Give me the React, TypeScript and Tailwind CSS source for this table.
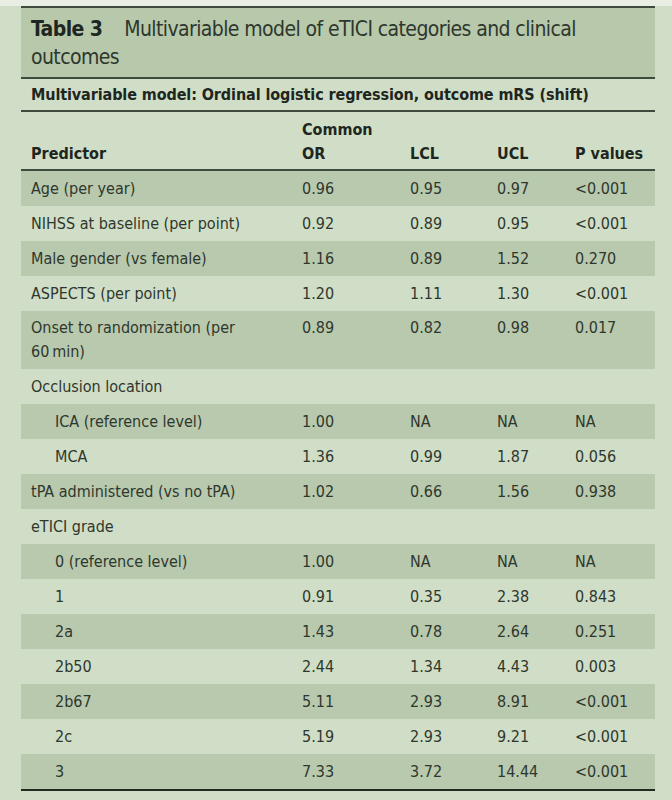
import React from 'react';

type Row = {
  label: string;
  vals?: [string, string, string, string];
  shaded?: boolean;
  indent?: boolean;
  tall?: boolean;
};

const rows: Row[] = [
  { label: 'Age (per year)', vals: ['0.96', '0.95', '0.97', '<0.001'], shaded: true },
  { label: 'NIHSS at baseline (per point)', vals: ['0.92', '0.89', '0.95', '<0.001'] },
  { label: 'Male gender (vs female)', vals: ['1.16', '0.89', '1.52', '0.270'], shaded: true },
  { label: 'ASPECTS (per point)', vals: ['1.20', '1.11', '1.30', '<0.001'] },
  { label: 'Onset to randomization (per 60\u2009min)', vals: ['0.89', '0.82', '0.98', '0.017'], shaded: true, tall: true },
  { label: 'Occlusion location' },
  { label: 'ICA (reference level)', vals: ['1.00', 'NA', 'NA', 'NA'], shaded: true, indent: true },
  { label: 'MCA', vals: ['1.36', '0.99', '1.87', '0.056'], indent: true },
  { label: 'tPA administered (vs no tPA)', vals: ['1.02', '0.66', '1.56', '0.938'], shaded: true },
  { label: 'eTICI grade' },
  { label: '0 (reference level)', vals: ['1.00', 'NA', 'NA', 'NA'], shaded: true, indent: true },
  { label: '1', vals: ['0.91', '0.35', '2.38', '0.843'], indent: true },
  { label: '2a', vals: ['1.43', '0.78', '2.64', '0.251'], shaded: true, indent: true },
  { label: '2b50', vals: ['2.44', '1.34', '4.43', '0.003'], indent: true },
  { label: '2b67', vals: ['5.11', '2.93', '8.91', '<0.001'], shaded: true, indent: true },
  { label: '2c', vals: ['5.19', '2.93', '9.21', '<0.001'], indent: true },
  { label: '3', vals: ['7.33', '3.72', '14.44', '<0.001'], shaded: true, indent: true },
];

const font = { fontFamily: '"Liberation Sans Narrow", "DejaVu Sans Condensed", "Liberation Sans", sans-serif' };
const cols = 'grid grid-cols-[271px_108px_87px_78px_1fr] px-[10px]';

export default function App() {
  return (
    <div className="w-[672px] h-[800px] bg-[#d1dec7] text-[#2e372d] overflow-hidden" style={font}>
      <div className="h-[6px] bg-[#e9eee4]" />
      <div className="ml-[21px] w-[634px]">
        <div className="border-t-2 border-b-2 border-[#3d4a3d] bg-[#b7c8ab] px-[10px] pt-[7px] pb-[6px] text-[21px] leading-[28px] tracking-[-0.6px]">
          <div className="flex flex-wrap">
            <span className="font-bold text-[#1d2620] mr-[22px]">Table 3</span>
            <span>Multivariable model of eTICI categories and clinical</span>
            <span className="w-full">outcomes</span>
          </div>
        </div>
        <div className="px-[10px] h-[33px] flex items-center text-[16px] tracking-[-0.1px] font-bold text-[#1d2620] border-b-2 border-[#3d4a3d]">
          Multivariable model: Ordinal logistic regression, outcome mRS (shift)
        </div>
        <div className={`${cols} h-[59px] items-end pb-[3px] text-[16px] font-bold leading-[24px] text-[#1d2620] border-b-2 border-[#3d4a3d]`}>
          <div>Predictor</div>
          <div>Common<br />OR</div>
          <div>LCL</div>
          <div>UCL</div>
          <div>P values</div>
        </div>
        <div className="border-b-2 border-[#222a22]">
          {rows.map((r) => (
            <div
              key={r.label}
              className={`${cols} ${r.shaded ? 'bg-[#b9c9ae]' : ''} ${r.tall ? 'h-[58px] pt-[5px]' : 'h-[35px] items-center'} text-[16px] leading-[24px]`}
            >
              <div className={`${r.indent ? 'pl-[24px]' : ''} ${r.tall ? 'pr-[60px]' : ''}`}>{r.label}</div>
              {r.vals?.map((v, i) => (
                <div key={i}>{v}</div>
              ))}
            </div>
          ))}
        </div>
      </div>
    </div>
  );
}
